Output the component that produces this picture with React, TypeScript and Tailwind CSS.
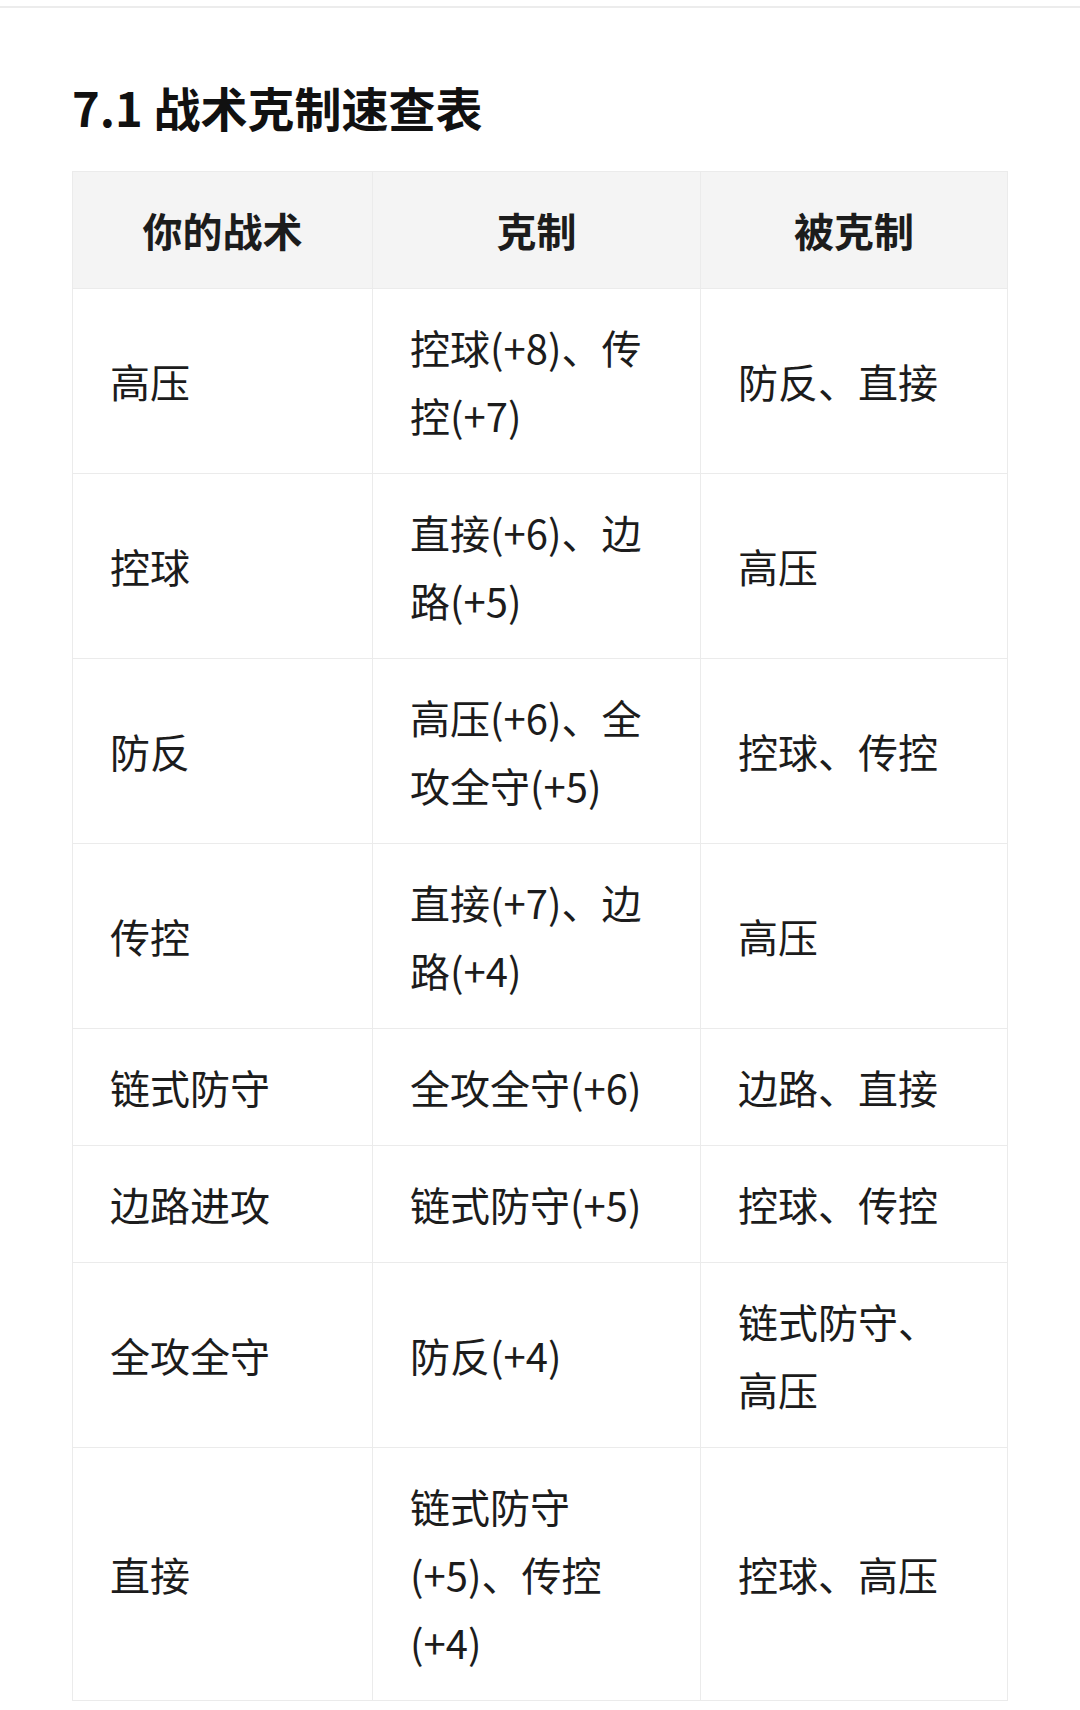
import React from "react";

type Row = {
  mine: string;
  beats: string;
  beatenBy: string;
};

const ROWS: Row[] = [
  { mine: "高压", beats: "控球(+8)、传控(+7)", beatenBy: "防反、直接" },
  { mine: "控球", beats: "直接(+6)、边路(+5)", beatenBy: "高压" },
  { mine: "防反", beats: "高压(+6)、全攻全守(+5)", beatenBy: "控球、传控" },
  { mine: "传控", beats: "直接(+7)、边路(+4)", beatenBy: "高压" },
  { mine: "链式防守", beats: "全攻全守(+6)", beatenBy: "边路、直接" },
  { mine: "边路进攻", beats: "链式防守(+5)", beatenBy: "控球、传控" },
  { mine: "全攻全守", beats: "防反(+4)", beatenBy: "链式防守、高压" },
  { mine: "直接", beats: "链式防守(+5)、传控(+4)", beatenBy: "控球、高压" },
];

const cell = "border border-[#ebebeb] px-[37px] py-6 align-middle";

export default function App() {
  return (
    <div
      className="min-h-[1710px] w-[1080px] bg-white text-[#1c1c1c]"
      style={{ fontFamily: '"Noto Sans CJK SC", "Noto Sans", sans-serif' }}
    >
      <div className="h-[8px] border-b-2 border-[#ececec]" />
      <div className="px-[72px]">
        <h2 className="pt-[68px] pb-[33px] text-[47px] font-bold leading-[62px] text-[#111]">
          7.1 战术克制速查表
        </h2>
        <table className="w-[935px] table-fixed border-collapse text-[40px] leading-[68px]">
          <colgroup>
            <col className="w-[300px]" />
            <col className="w-[328px]" />
            <col className="w-[307px]" />
          </colgroup>
          <thead>
            <tr className="bg-[#f4f4f4]">
              <th className={`${cell} text-center font-bold`}>你的战术</th>
              <th className={`${cell} text-center font-bold`}>克制</th>
              <th className={`${cell} text-center font-bold`}>被克制</th>
            </tr>
          </thead>
          <tbody>
            {ROWS.map((r) => (
              <tr key={r.mine}>
                <td className={`${cell} text-left`}>{r.mine}</td>
                <td className={`${cell} text-left`}>{r.beats}</td>
                <td className={`${cell} text-left`}>{r.beatenBy}</td>
              </tr>
            ))}
          </tbody>
        </table>
      </div>
    </div>
  );
}
